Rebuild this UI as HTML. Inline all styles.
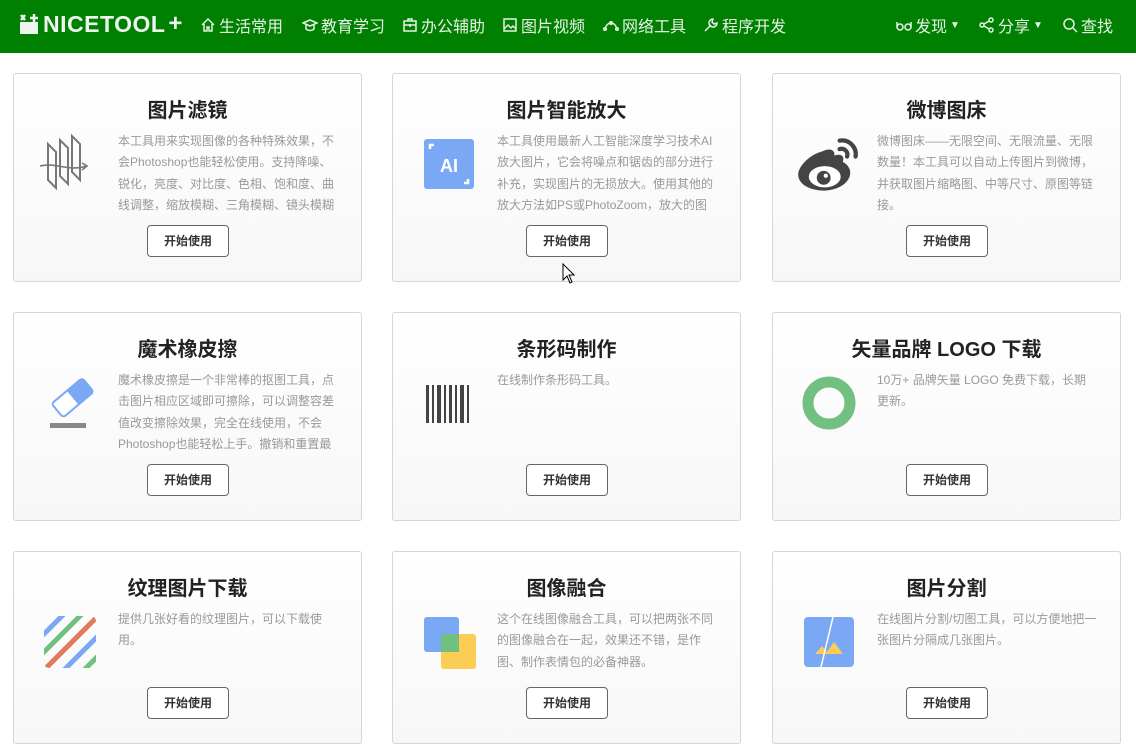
<!DOCTYPE html>
<html><head><meta charset="utf-8">
<style>
*{margin:0;padding:0;box-sizing:border-box}
body{width:1136px;height:750px;overflow:hidden;background:#fff;font-family:"Liberation Sans","Noto Sans CJK SC",sans-serif;position:relative}
.hd{position:absolute;left:0;top:0;width:1136px;height:53px;background:#008000;color:#e8f3e8}
.logo{position:absolute;left:18px;top:10px;font-size:23px;font-weight:900;letter-spacing:0.5px;color:#eef5ee;display:flex;align-items:center;gap:3px}
.nav{position:absolute;top:13px;font-size:16px;display:flex;align-items:center;gap:3px;color:#e6f2e6}
.nav svg{width:16px;height:16px;stroke:#e6f2e6;fill:none;stroke-width:1.5}
.card{position:absolute;width:349px;border:1px solid #d6d6d6;border-radius:3px;background:linear-gradient(#fff,#f7f7f7)}
.t{position:absolute;left:0;right:0;top:20px;text-align:center;font-size:20px;font-weight:bold;color:#222}
.d{position:absolute;left:104px;top:57px;width:220px;font-size:12px;line-height:21.3px;color:#999;height:86px;overflow:hidden}
.b{position:absolute;left:133px;width:82px;height:32px;border:1px solid #666;border-radius:4px;background:#fff;font-size:12px;font-weight:bold;color:#333;text-align:center;line-height:30px}
.ic{position:absolute;left:24px;width:64px;height:64px}
</style></head><body>
<div class="hd">
<div class="logo"><svg width="22" height="22" viewBox="0 0 22 22"><rect x="2" y="9" width="18" height="12" fill="#eef5ee"/><path d="M3 2l4 5M7 2l-4 5" stroke="#eef5ee" stroke-width="2.5"/><path d="M16 1v8M12 5h8" stroke="#eef5ee" stroke-width="2.5"/></svg>NICETOOL<span style="font-size:24px">+</span></div>
<div class="nav" style="left:200px"><svg viewBox="0 0 16 16"><path d="M2 8L8 2l6 6M4 7v7h3v-4h2v4h3V7"/></svg>生活常用</div>
<div class="nav" style="left:302px"><svg viewBox="0 0 16 16"><path d="M1 6l7-3 7 3-7 3z M4 8v4c2 2 6 2 8 0V8"/></svg>教育学习</div>
<div class="nav" style="left:402px"><svg viewBox="0 0 16 16"><rect x="2" y="4" width="12" height="10"/><path d="M6 4V2h4v2M2 8h12M8 7v3"/></svg>办公辅助</div>
<div class="nav" style="left:502px"><svg viewBox="0 0 16 16"><rect x="2" y="2" width="12" height="12"/><path d="M2 12l4-4 3 3 2-2 3 3"/></svg>图片视频</div>
<div class="nav" style="left:603px"><svg viewBox="0 0 16 16"><path d="M2 12C4 4 12 4 14 12"/><circle cx="2" cy="12" r="1.3"/><circle cx="14" cy="12" r="1.3"/><circle cx="8" cy="6" r="1.3"/></svg>网络工具</div>
<div class="nav" style="left:703px"><svg viewBox="0 0 16 16"><path d="M2 14l6-6M10 2a4 4 0 104 4l-3 1-2-2z"/></svg>程序开发</div>
<div class="nav" style="left:896px"><svg viewBox="0 0 16 16"><circle cx="4" cy="10" r="3"/><circle cx="12" cy="10" r="3"/><path d="M1 10V5M15 10V5"/></svg>发现 <span style="font-size:10px">▼</span></div>
<div class="nav" style="left:979px"><svg viewBox="0 0 16 16"><circle cx="12" cy="3" r="2"/><circle cx="3" cy="8" r="2"/><circle cx="12" cy="13" r="2"/><path d="M5 7l5-3M5 9l5 3"/></svg>分享 <span style="font-size:10px">▼</span></div>
<div class="nav" style="left:1062px"><svg viewBox="0 0 16 16"><circle cx="7" cy="7" r="5"/><path d="M11 11l4 4"/></svg>查找</div>
</div>

<div class="card" style="left:13px;top:73px;height:209px">
<div class="t">图片滤镜</div>
<svg class="ic" style="top:56px" viewBox="0 0 64 64" fill="none" stroke="#777" stroke-width="2"><path d="M10 14l0 36 8 8V22zM22 10v36l8 8V18zM34 6v36l8 8V14z"/><path d="M2 36c15-4 30 6 46 0" stroke-width="1.6"/><path d="M44 33l5 3-5 4" stroke-width="1.6"/></svg>
<div class="d">本工具用来实现图像的各种特殊效果，不会Photoshop也能轻松使用。支持降噪、锐化，亮度、对比度、色相、饱和度、曲线调整，缩放模糊、三角模糊、镜头模糊等</div>
<div class="b" style="top:151px">开始使用</div></div>

<div class="card" style="left:392px;top:73px;height:209px">
<div class="t">图片智能放大</div>
<svg class="ic" style="top:58px" viewBox="0 0 64 64"><rect x="7" y="7" width="50" height="50" rx="3" fill="#7aa8f5"/><path d="M13 17v-4h4M51 47v4h-4" stroke="#fff" stroke-width="2.5" fill="none"/><text x="32" y="40" fill="#fff" font-size="18" font-weight="bold" text-anchor="middle" font-family="Liberation Sans">AI</text></svg>
<div class="d">本工具使用最新人工智能深度学习技术AI放大图片，它会将噪点和锯齿的部分进行补充，实现图片的无损放大。使用其他的放大方法如PS或PhotoZoom，放大的图片会</div>
<div class="b" style="top:151px">开始使用</div></div>

<div class="card" style="left:772px;top:73px;height:209px">
<div class="t">微博图床</div>
<svg class="ic" style="top:56px;left:22px;width:68px;height:68px" viewBox="0 0 64 64"><path d="M26 20c8-4 12 0 11 4 6-2 10 0 8 6 4 2 7 6 7 10 0 10-12 17-25 17S3 51 3 42c0-8 11-19 23-22z" fill="#444"/><ellipse cx="28" cy="44" rx="15" ry="10" fill="#fff"/><circle cx="27" cy="45" r="6.5" fill="#444"/><circle cx="29" cy="43" r="2" fill="#fff"/><path d="M42 10a13 13 0 0115 15M42 18a5.5 5.5 0 017 7" stroke="#444" stroke-width="4" fill="none" stroke-linecap="round"/></svg>
<div class="d">微博图床——无限空间、无限流量、无限数量！本工具可以自动上传图片到微博，并获取图片缩略图、中等尺寸、原图等链接。</div>
<div class="b" style="top:151px">开始使用</div></div>

<div class="card" style="left:13px;top:312px;height:209px">
<div class="t">魔术橡皮擦</div>
<svg class="ic" style="top:58px" viewBox="0 0 64 64"><g transform="rotate(-40 34 26)"><rect x="14" y="18" width="40" height="18" rx="3" fill="#fff" stroke="#7aa8f5" stroke-width="2"/><path d="M34 18h17a3 3 0 013 3v12a3 3 0 01-3 3H34z" fill="#7aa8f5"/></g><rect x="12" y="52" width="36" height="5" fill="#888"/></svg>
<div class="d">魔术橡皮擦是一个非常棒的抠图工具，点击图片相应区域即可擦除，可以调整容差值改变擦除效果，完全在线使用，不会Photoshop也能轻松上手。撤销和重置最</div>
<div class="b" style="top:151px">开始使用</div></div>

<div class="card" style="left:392px;top:312px;height:209px">
<div class="t">条形码制作</div>
<svg class="ic" style="top:58px" viewBox="0 0 64 64" fill="#444"><rect x="9" y="14" width="3" height="38"/><rect x="15" y="14" width="2" height="38"/><rect x="20" y="14" width="4" height="38"/><rect x="27" y="14" width="2" height="38"/><rect x="32" y="14" width="3" height="38"/><rect x="38" y="14" width="2" height="38"/><rect x="43" y="14" width="4" height="38"/><rect x="50" y="14" width="2" height="38"/></svg>
<div class="d">在线制作条形码工具。</div>
<div class="b" style="top:151px">开始使用</div></div>

<div class="card" style="left:772px;top:312px;height:209px">
<div class="t">矢量品牌 LOGO 下载</div>
<svg class="ic" style="top:58px" viewBox="0 0 64 64"><circle cx="32" cy="32" r="21" fill="none" stroke="#72c07f" stroke-width="11"/></svg>
<div class="d">10万+ 品牌矢量 LOGO 免费下载，长期更新。</div>
<div class="b" style="top:151px">开始使用</div></div>

<div class="card" style="left:13px;top:551px;height:193px">
<div class="t">纹理图片下载</div>
<svg class="ic" style="top:58px" viewBox="0 0 64 64"><defs><clipPath id="c"><rect x="6" y="6" width="52" height="52" rx="5"/></clipPath></defs><g clip-path="url(#c)" stroke-width="5"><path d="M0 30L30 0" stroke="#7aa8f5"/><path d="M2 46L46 2" stroke="#72c07f"/><path d="M8 58L58 8" stroke="#e07a5f"/><path d="M20 66L66 20" stroke="#7aa8f5"/><path d="M36 70L70 36" stroke="#72c07f"/></g></svg>
<div class="d">提供几张好看的纹理图片，可以下载使用。</div>
<div class="b" style="top:135px">开始使用</div></div>

<div class="card" style="left:392px;top:551px;height:193px">
<div class="t">图像融合</div>
<svg class="ic" style="top:58px" viewBox="0 0 64 64"><rect x="7" y="7" width="35" height="35" rx="3" fill="#7aa8f5"/><rect x="24" y="24" width="35" height="35" rx="3" fill="#fccd55"/><rect x="24" y="24" width="18" height="18" fill="#72c07f"/></svg>
<div class="d">这个在线图像融合工具，可以把两张不同的图像融合在一起，效果还不错，是作图、制作表情包的必备神器。</div>
<div class="b" style="top:135px">开始使用</div></div>

<div class="card" style="left:772px;top:551px;height:193px">
<div class="t">图片分割</div>
<svg class="ic" style="top:58px" viewBox="0 0 64 64"><rect x="7" y="7" width="50" height="50" rx="4" fill="#7aa8f5"/><path d="M18 44l7-8 5 6 7-10 9 12z" fill="#fccd55"/><path d="M36 7L24 57" stroke="#fff" stroke-width="1.5"/></svg>
<div class="d">在线图片分割/切图工具，可以方便地把一张图片分隔成几张图片。</div>
<div class="b" style="top:135px">开始使用</div></div>

<svg style="position:absolute;left:562px;top:263px" width="14" height="22" viewBox="0 0 14 22"><path d="M1 1v16l4-4 3 7 2-1-3-7h5z" fill="#fff" stroke="#000" stroke-width="1"/></svg>
</body></html>
